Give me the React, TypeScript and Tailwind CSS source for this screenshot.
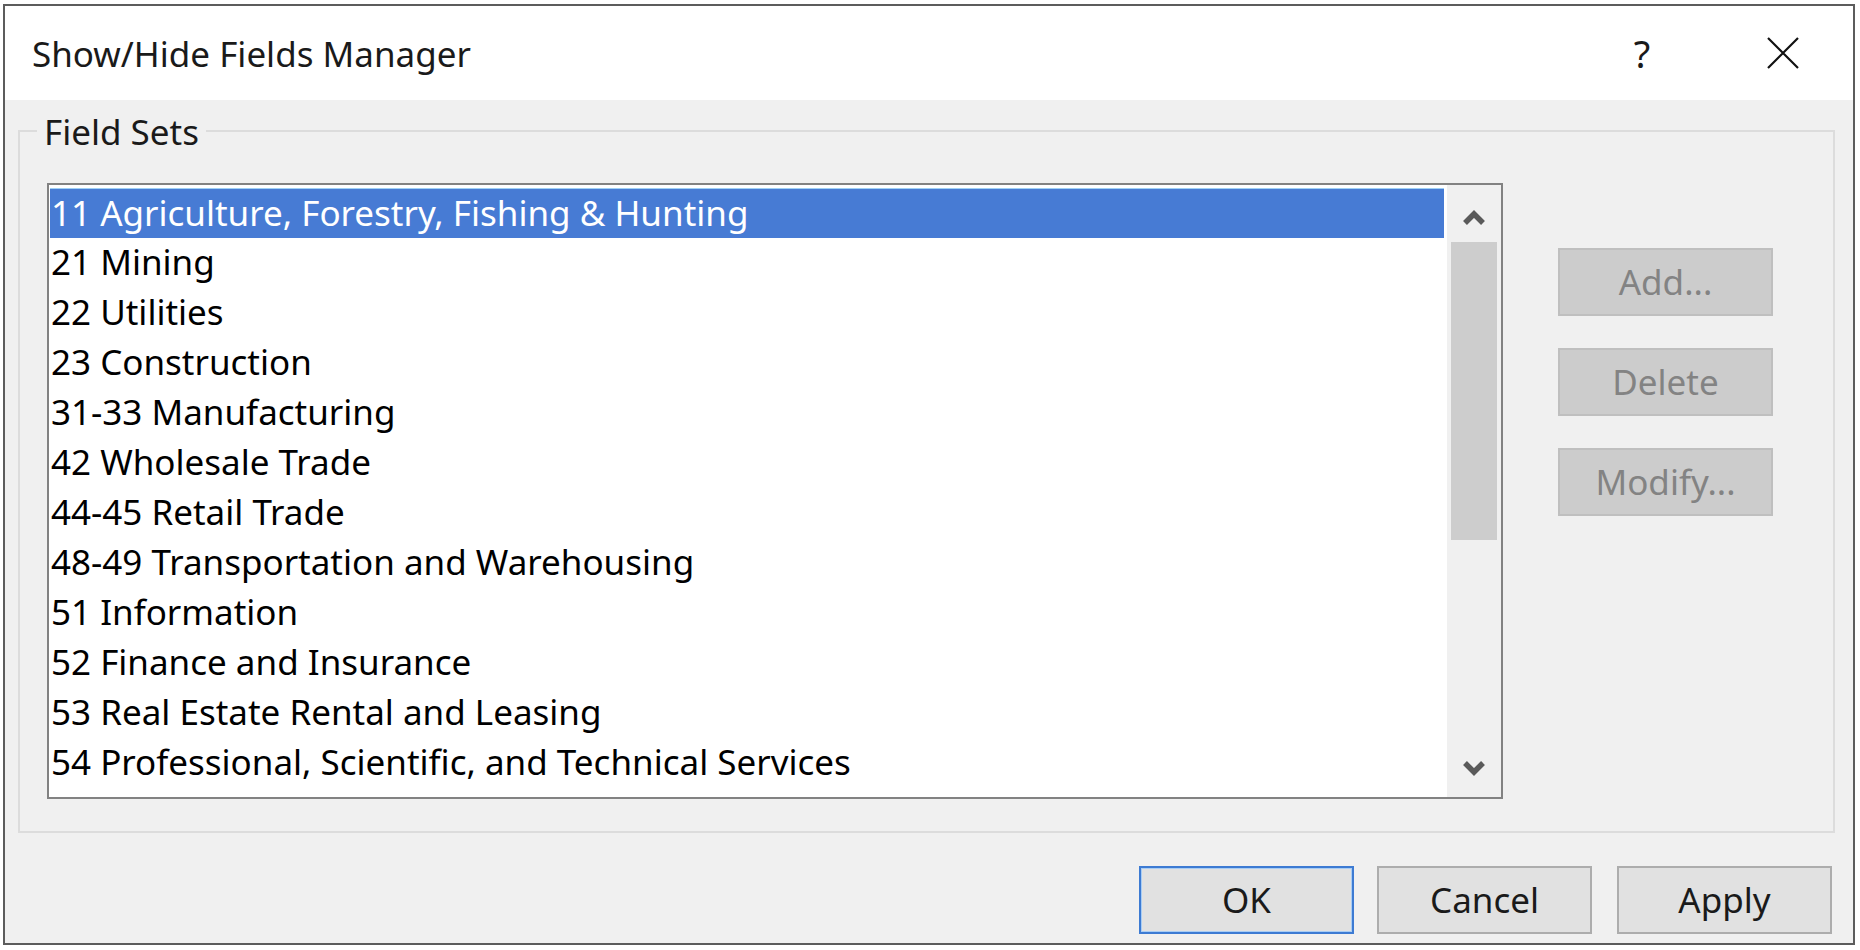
const items = [
  '11 Agriculture, Forestry, Fishing & Hunting',
  '21 Mining',
  '22 Utilities',
  '23 Construction',
  '31-33 Manufacturing',
  '42 Wholesale Trade',
  '44-45 Retail Trade',
  '48-49 Transportation and Warehousing',
  '51 Information',
  '52 Finance and Insurance',
  '53 Real Estate Rental and Leasing',
  '54 Professional, Scientific, and Technical Services',
];

function Chevron({ up }: { up?: boolean }) {
  return (
    <svg width="24" height="16" viewBox="0 0 24 16">
      <path
        d={up ? 'M3 13 L12 4 L21 13' : 'M3 3 L12 12 L21 3'}
        fill="none"
        stroke="#5a5a5a"
        strokeWidth="5.5"
      />
    </svg>
  );
}

function SideButton({ label }: { label: string }) {
  return (
    <div className="w-[215px] h-[68px] flex items-center justify-center bg-[#cccccc] border-2 border-[#bfbfbf] text-[#838383]">
      {label}
    </div>
  );
}

export default function App() {
  return (
    <div className="w-[1860px] h-[950px] bg-white pt-[4px] pl-[3px] font-['Noto_Sans',sans-serif] text-[35px] text-[#1a1a1a]">
      <div className="w-[1852px] h-[941px] border-2 border-[#5c5c5c] bg-[#f0f0f0] flex flex-col">
        {/* Title bar */}
        <div className="h-[94px] bg-white flex items-center pl-[27px] shrink-0">
          <span className="leading-none">Show/Hide Fields Manager</span>
          <span className="ml-auto w-[20px] text-center text-[38px] leading-none">?</span>
          <svg className="ml-[115px] mr-[54px]" width="32" height="32" viewBox="0 0 32 32">
            <path d="M1 1 L31 31 M31 1 L1 31" stroke="#111" strokeWidth="2.2" fill="none" />
          </svg>
        </div>

        {/* Field Sets group */}
        <div className="relative mt-[30px] ml-[13px] w-[1817px] h-[703px] border-2 border-[#dcdcdc]">
          <span className="absolute left-[17px] top-[-17px] px-[7px] leading-[34px] bg-[#f0f0f0]">Field Sets</span>
          <div className="flex items-start pt-[51px] pl-[27px]">
            {/* List box */}
            <div className="w-[1456px] h-[616px] border-2 border-[#828282] bg-white flex">
              <div className="flex-1 pt-[3px] pl-[1px] pr-[3px]">
                {items.map((t, i) => (
                  <div
                    key={t}
                    className={
                      i === 0
                        ? 'h-[50px] leading-[48px] pl-[1px] bg-[#477bd4] text-white border-t border-[#9fd0f5]'
                        : 'h-[50px] leading-[48px] pl-[1px] text-black'
                    }
                  >
                    {t}
                  </div>
                ))}
              </div>
              {/* Scrollbar */}
              <div className="w-[54px] bg-[#f0f0f0] flex flex-col items-center">
                <div className="h-[57px] pt-[25px]">
                  <Chevron up />
                </div>
                <div className="w-[46px] h-[298px] bg-[#cdcdcd]" />
                <div className="flex-1 flex items-end pb-[21px]">
                  <Chevron />
                </div>
              </div>
            </div>

            {/* Side buttons */}
            <div className="ml-[55px] mt-[65px] flex flex-col gap-[32px]">
              <SideButton label="Add..." />
              <SideButton label="Delete" />
              <SideButton label="Modify..." />
            </div>
          </div>
        </div>

        {/* Dialog buttons */}
        <div className="mt-[33px] flex justify-end pr-[21px]">
          <div className="w-[215px] h-[68px] flex items-center justify-center bg-[#e1e1e1] border-2 border-[#3d7bd3] shadow-[inset_0_0_0_1px_#a9cdf4]">
            OK
          </div>
          <div className="ml-[23px] w-[215px] h-[68px] flex items-center justify-center bg-[#e1e1e1] border-2 border-[#adadad]">
            Cancel
          </div>
          <div className="ml-[25px] w-[215px] h-[68px] flex items-center justify-center bg-[#e1e1e1] border-2 border-[#adadad]">
            Apply
          </div>
        </div>
      </div>
    </div>
  );
}
